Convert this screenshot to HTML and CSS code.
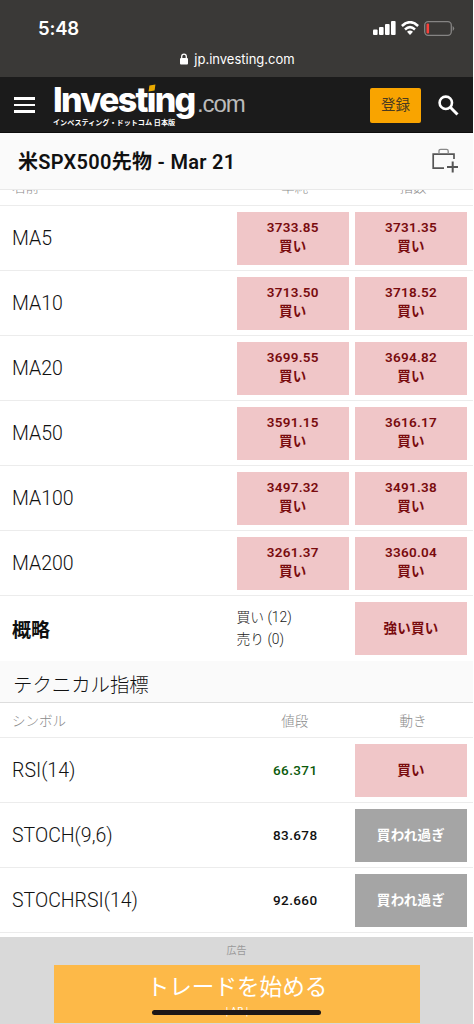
FILE: index.html
```html
<!DOCTYPE html>
<html lang="ja">
<head>
<meta charset="UTF-8">
<meta name="viewport" content="width=device-width, initial-scale=1.0">
<title>米SPX500先物 - Investing.com</title>
<link rel="stylesheet" href="styles.css">
</head>
<body>
<div class="screen">

<!-- status bar -->
<div class="phoneBar">
  <div class="statusRow">
    <span class="time">5:48</span>
    <div class="statusIcons">
      <svg width="23" height="14" viewBox="0 0 23 14" fill="#fff"><rect x="0" y="8.5" width="4.6" height="5.5" rx="1"/><rect x="6" y="6" width="4.6" height="8" rx="1"/><rect x="12" y="3" width="4.6" height="11" rx="1"/><rect x="18" y="0" width="4.6" height="14" rx="1"/></svg>
      <svg width="18" height="14" viewBox="0 0 18 14" fill="none" stroke="#fff" stroke-width="2.5"><path d="M.9 5Q9-2.7 17.1 5"/><path d="M4 8.5Q9 3.7 14 8.5"/><path d="M9 14 6 10.8Q9 8.3 12 10.8Z" fill="#fff" stroke="none"/></svg>
      <svg width="31" height="15" viewBox="0 0 31 15"><rect x=".7" y=".7" width="26.6" height="13.6" rx="3.5" fill="none" stroke="#858483" stroke-width="1.3"/><rect x="2.5" y="2.5" width="2.6" height="10" rx="1" fill="#f5403a"/><path d="M28.7 5q3 2.5 0 5z" fill="#858483"/></svg>
    </div>
  </div>
  <div class="address">
    <svg width="8" height="12" viewBox="0 0 8 12"><rect x="0" y="5" width="8" height="6.5" rx="1" fill="#fff"/><path d="M1.7 5.5V3.4a2.3 2.3 0 0 1 4.6 0v2.1" fill="none" stroke="#fff" stroke-width="1.3"/></svg>
    <span>jp.investing.com</span>
  </div>
</div>

<header class="siteHeader">
  <div class="burger"><i></i><i></i><i></i></div>
  <div class="logo">
    <div class="logoMain"><b>Invest<span class="logoI">ı</span>ng</b><span class="logoCom">.com</span></div>
    <div class="logoSub">インベスティング・ドットコム 日本版</div>
  </div>
  <div class="signup">登録</div>
  <svg class="search" width="21" height="21" viewBox="0 0 21 21" fill="none" stroke="#fff" stroke-width="2.6"><circle cx="7.8" cy="7.8" r="6.2"/><path d="M12.3 12.3 19.5 19.5" stroke-width="3"/></svg>
</header>

<div class="titleBar">
  <h1>米SPX500先物 - Mar 21</h1>
  <svg width="27" height="25" viewBox="0 0 27 25" fill="none" stroke="#555" stroke-width="1.7"><path d="M12 20.2H1.2V6.2H22V11"/><path d="M7 6V3q0-1.7 1.7-1.7h5.8Q16.2 1.3 16.2 3V6" stroke="#888" stroke-width="1.3"/><path d="M20.7 13.5v11M15 19h11" stroke-width="2"/></svg>
</div>

<!-- moving averages -->
<div class="row headRow cutRow"><span>名前</span><span>単純</span><span>指数</span></div>
<div class="row"><span class="name">MA5</span><span class="cell buy">3733.85<br>買い</span><span class="cell buy">3731.35<br>買い</span></div>
<div class="row"><span class="name">MA10</span><span class="cell buy">3713.50<br>買い</span><span class="cell buy">3718.52<br>買い</span></div>
<div class="row"><span class="name">MA20</span><span class="cell buy">3699.55<br>買い</span><span class="cell buy">3694.82<br>買い</span></div>
<div class="row"><span class="name">MA50</span><span class="cell buy">3591.15<br>買い</span><span class="cell buy">3616.17<br>買い</span></div>
<div class="row"><span class="name">MA100</span><span class="cell buy">3497.32<br>買い</span><span class="cell buy">3491.38<br>買い</span></div>
<div class="row"><span class="name">MA200</span><span class="cell buy">3261.37<br>買い</span><span class="cell buy">3360.04<br>買い</span></div>
<div class="row summary"><span class="name">概略</span><span class="counts">買い (12)<br>売り (0)</span><span class="cell buy single">強い買い</span></div>

<!-- technical indicators -->
<h2>テクニカル指標</h2>
<div class="row headRow"><span>シンボル</span><span>値段</span><span>動き</span></div>
<div class="row"><span class="name">RSI(14)</span><span class="value green">66.371</span><span class="cell buy single">買い</span></div>
<div class="row"><span class="name">STOCH(9,6)</span><span class="value">83.678</span><span class="cell over single">買われ過ぎ</span></div>
<div class="row"><span class="name">STOCHRSI(14)</span><span class="value">92.660</span><span class="cell over single">買われ過ぎ</span></div>

<div class="adBar">
  <div class="adLabel">広告</div>
  <div class="banner">
    <div class="bannerText">トレードを始める</div>
    <div class="bannerSmall">| AB |</div>
    <div class="homeLine"></div>
  </div>
</div>

</div>
</body>
</html>
```
FILE: styles.css
```css
* {
  box-sizing: border-box;
}
body {
  margin: 0;
  background: #fff;
  color: #111;
  font-family: Roboto, "Noto Sans CJK JP", sans-serif;
}
svg {
  display: block;
  flex: none;
}
.screen {
  width: 473px;
  height: 1024px;
  overflow: hidden;
  display: flex;
  flex-direction: column;
}
.screen > * {
  flex: none;
}

/* status bar */
.phoneBar {
  height: 77px;
  background: #3a3937;
  color: #fff;
  font-family: Inter, sans-serif;
}
.statusRow {
  display: flex;
  justify-content: space-between;
  padding: 16px 18px 0 38px;
  height: 49px;
}
.time {
  font-size: 18.5px;
  line-height: 24px;
  font-weight: 600;
  letter-spacing: -.2px;
}
.statusIcons {
  display: flex;
  gap: 5px;
  padding-top: 5px;
}
.address {
  display: flex;
  align-items: center;
  justify-content: center;
  gap: 6px;
  height: 20px;
  font-size: 13px;
  padding-left: 2px;
}

/* site header */
.siteHeader {
  height: 56px;
  background: #1b1b1b;
  border-bottom: 1px solid #0d0d0d;
  display: flex;
  align-items: center;
  padding: 1px 14px 0 14px;
}
.burger {
  width: 21px;
  display: grid;
  gap: 4px;
}
.burger i {
  height: 2.5px;
  background: #fff;
}
.logo {
  width: 240px;
  margin-left: 18px;
  margin-right: auto;
  color: #fff;
}
.logoMain {
  height: 34px;
  line-height: 38px;
  display: flex;
  white-space: nowrap;
  font-family: Inter, sans-serif;
}
.logoMain b {
  width: 144px;
  font-size: 34px;
  font-weight: 800;
  letter-spacing: -1.7px;
}
.logoI {
  position: relative;
}
.logoI::before {
  content: "";
  position: absolute;
  left: 2px;
  top: 6px;
  width: 6px;
  height: 6px;
  background: #e9a900;
  transform: skew(-8deg, -8deg);
}
.logoCom {
  font-family: "Liberation Sans", sans-serif;
  font-size: 24px;
  line-height: 45px;
  letter-spacing: -1.1px;
  color: #bbb;
}
.logoSub {
  width: 122px;
  font-size: 7.1px;
  line-height: 15px;
  font-weight: 700;
  white-space: nowrap;
}
.signup {
  width: 51px;
  height: 35px;
  line-height: 36px;
  border-radius: 2px;
  background: #f9a400;
  color: #493b20;
  font-size: 14.5px;
  text-align: center;
}
.search {
  margin-left: 17px;
}

/* instrument title */
.titleBar {
  height: 57px;
  background: #fafafa;
  border-bottom: 1px solid #e9e9e9;
  display: flex;
  align-items: center;
  justify-content: space-between;
  padding: 0 14px 2px 18px;
}
h1 {
  margin: 0;
  font-size: 20px;
  font-weight: 600;
  letter-spacing: .3px;
}

/* table rows */
.row {
  height: 65px;
  border-bottom: 1px solid #ececec;
  display: grid;
  grid-template-columns: 218.5px 112.5px 112px;
  column-gap: 6px;
  align-items: center;
  padding-left: 12px;
}
.name {
  font-size: 19.5px;
  font-weight: 300;
}
.cell {
  height: 53px;
  display: grid;
  place-content: center;
  padding-bottom: 3px;
  text-align: center;
  font-size: 13.5px;
  line-height: 19px;
  font-weight: 600;
  letter-spacing: .3px;
}
.single {
  padding-bottom: 0;
}
.buy {
  background: #f0c6c8;
  color: #790b0e;
}
.over {
  background: #a5a5a5;
  color: #fff;
}
.summary {
  border-bottom-color: transparent;
}
.summary .name {
  font-weight: 700;
  font-size: 19px;
}
.counts {
  font-size: 13.8px;
  line-height: 22px;
  font-weight: 300;
  color: #222;
}
.value {
  font-size: 13.5px;
  font-weight: 500;
  letter-spacing: .4px;
  text-align: center;
  padding-left: 5px;
}
.green {
  color: #0b5a0b;
}
.headRow {
  height: 35px;
  font-size: 13.5px;
  font-weight: 300;
  color: #8a8a8a;
}
.headRow span + span {
  text-align: center;
  padding-left: 4px;
}
/* the first header row is scrolled half under the title bar */
.cutRow {
  height: 16px;
  overflow: hidden;
  align-content: end;
}
.cutRow span {
  line-height: 20px;
  margin-bottom: 8px;
}
h2 {
  margin: 0;
  height: 42px;
  line-height: 50px;
  padding-left: 13px;
  background: #fafafa;
  border-bottom: 1px solid #ddd;
  font-size: 19.4px;
  font-weight: 300;
}

/* advertisement */
.adBar {
  margin-top: 4px;
  height: 87px;
  background: #d9d9d9;
}
.adLabel {
  height: 28px;
  line-height: 27px;
  font-size: 10px;
  color: #999;
  text-align: center;
}
.banner {
  position: relative;
  width: 366px;
  height: 58px;
  margin-left: 54px;
  background: #fdb948;
  color: #fff;
  text-align: center;
  overflow: hidden;
}
.bannerText {
  height: 42px;
  font-size: 22.6px;
  line-height: 45px;
}
.bannerSmall {
  font-size: 10px;
  line-height: 10px;
}
.homeLine {
  position: absolute;
  left: 98px;
  bottom: 8px;
  width: 169px;
  height: 5px;
  border-radius: 3px;
  background: #1c1717;
}
```
